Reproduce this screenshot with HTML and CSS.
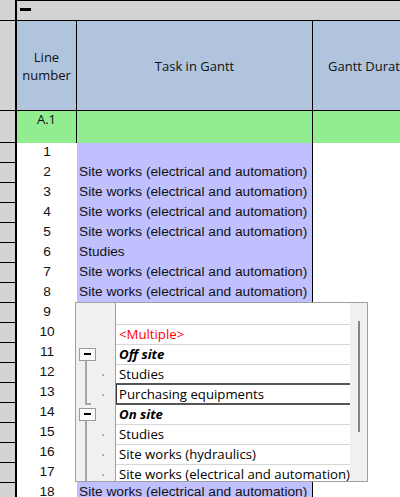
FILE: index.html
```html
<!DOCTYPE html>
<html>
<head>
<meta charset="utf-8">
<link rel="stylesheet" href="styles.css">
</head>
<body>
<div class="sheet">
  <div class="row top">
    <div class="gutter"></div>
    <div class="topbar"><span class="collapse"></span></div>
  </div>
  <div class="row head">
    <div class="gutter"></div>
    <div class="cell c1 hd">Line<br>number</div>
    <div class="cell c2 hd">Task in Gantt</div>
    <div class="cell c3 hd hd3">Gantt Duration</div>
  </div>
  <div class="row group">
    <div class="gutter"></div>
    <div class="cell c1 grp">A.1</div>
    <div class="cell c2 grp"></div>
    <div class="cell c3 grp"></div>
  </div>
  <div class="row data"><div class="gutter"></div><div class="cell c1 num">1</div><div class="cell c2 task"></div><div class="cell c3"></div></div>
  <div class="row data"><div class="gutter"></div><div class="cell c1 num">2</div><div class="cell c2 task">Site works (electrical and automation)</div><div class="cell c3"></div></div>
  <div class="row data"><div class="gutter"></div><div class="cell c1 num">3</div><div class="cell c2 task">Site works (electrical and automation)</div><div class="cell c3"></div></div>
  <div class="row data"><div class="gutter"></div><div class="cell c1 num">4</div><div class="cell c2 task">Site works (electrical and automation)</div><div class="cell c3"></div></div>
  <div class="row data"><div class="gutter"></div><div class="cell c1 num">5</div><div class="cell c2 task">Site works (electrical and automation)</div><div class="cell c3"></div></div>
  <div class="row data"><div class="gutter"></div><div class="cell c1 num">6</div><div class="cell c2 task">Studies</div><div class="cell c3"></div></div>
  <div class="row data"><div class="gutter"></div><div class="cell c1 num">7</div><div class="cell c2 task">Site works (electrical and automation)</div><div class="cell c3"></div></div>
  <div class="row data"><div class="gutter"></div><div class="cell c1 num">8</div><div class="cell c2 task">Site works (electrical and automation)</div><div class="cell c3"></div></div>
  <div class="row data"><div class="gutter"></div><div class="cell c1 num">9</div><div class="cell c2 task"></div><div class="cell c3"></div></div>
  <div class="row data"><div class="gutter"></div><div class="cell c1 num">10</div><div class="cell c2 task"></div><div class="cell c3"></div></div>
  <div class="row data"><div class="gutter"></div><div class="cell c1 num">11</div><div class="cell c2 task"></div><div class="cell c3"></div></div>
  <div class="row data"><div class="gutter"></div><div class="cell c1 num">12</div><div class="cell c2 task"></div><div class="cell c3"></div></div>
  <div class="row data"><div class="gutter"></div><div class="cell c1 num">13</div><div class="cell c2 task"></div><div class="cell c3"></div></div>
  <div class="row data"><div class="gutter"></div><div class="cell c1 num">14</div><div class="cell c2 task"></div><div class="cell c3"></div></div>
  <div class="row data"><div class="gutter"></div><div class="cell c1 num">15</div><div class="cell c2 task"></div><div class="cell c3"></div></div>
  <div class="row data"><div class="gutter"></div><div class="cell c1 num">16</div><div class="cell c2 task"></div><div class="cell c3"></div></div>
  <div class="row data"><div class="gutter"></div><div class="cell c1 num">17</div><div class="cell c2 task"></div><div class="cell c3"></div></div>
  <div class="row data"><div class="gutter"></div><div class="cell c1 num">18</div><div class="cell c2 task">Site works (electrical and automation)</div><div class="cell c3"></div></div>
</div>

<div class="dropdown">
  <div class="tree">
    <span class="toggle t1"></span>
    <span class="vline v1"></span>
    <span class="hline"></span>
    <span class="toggle t2"></span>
    <span class="vline v2"></span>
    <span class="dot d1"></span>
    <span class="dot d2"></span>
    <span class="dot d3"></span>
    <span class="dot d4"></span>
    <span class="dot d5"></span>
  </div>
  <div class="list">
    <div class="item first"></div>
    <div class="item multi">&lt;Multiple&gt;</div>
    <div class="item grouphd">Off site</div>
    <div class="item before-sel">Studies</div>
    <div class="item selected">Purchasing equipments</div>
    <div class="item grouphd">On site</div>
    <div class="item">Studies</div>
    <div class="item">Site works (hydraulics)</div>
    <div class="item">Site works (electrical and automation)</div>
  </div>
  <div class="scroll"><span class="thumb"></span></div>
</div>
</body>
</html>
```
FILE: styles.css
```css
html, body {
  margin: 0;
  padding: 0;
  width: 400px;
  height: 497px;
  overflow: hidden;
  background: #fff;
}
body {
  position: relative;
  font-family: "Liberation Sans", Arial, sans-serif;
  color: #111;
}
.sheet {
  display: flex;
  flex-direction: column;
  width: 400px;
  height: 497px;
  overflow: hidden;
}
.row {
  display: flex;
  flex: none;
}
.gutter {
  width: 17px;
  flex: none;
  box-sizing: border-box;
  background: #d3d3d3;
  border-right: 2px solid #000;
  border-bottom: 1px solid #000;
}
.top { height: 21px; }
.topbar {
  flex: 1;
  box-sizing: border-box;
  background: #d3d3d3;
  border-top: 1px solid #000;
  border-bottom: 1px solid #000;
  padding: 7px 0 0 3px;
}
.collapse {
  display: block;
  width: 11px;
  height: 3px;
  background: #000;
}
.cell {
  box-sizing: border-box;
  flex: none;
  overflow: hidden;
  white-space: nowrap;
}
.c1 { width: 60px; }
.c2 { width: 236px; border-right: 1px solid #000; }
.c3 { width: 87px; }

.head { height: 90px; }
.hd {
  background: #b0c4de;
  border-bottom: 1px solid #000;
  display: flex;
  align-items: center;
  justify-content: center;
  text-align: center;
  font-family: "Open Sans", "Liberation Sans", sans-serif;
  font-size: 13px;
  line-height: 18px;
  color: #111;
}
.hd3 {
  justify-content: flex-start;
  padding-left: 15px;
}
.head .c1 { border-right: 1px solid #000; }

.group { height: 32px; }
.grp {
  background: #90ee90;
  font-family: "Open Sans", "Liberation Sans", sans-serif;
  font-size: 13px;
  line-height: 16px;
  text-align: center;
  color: #111;
}
.group .c1 { border-right: 1px solid #000; }

.data { height: 20px; }
.num {
  text-align: center;
  font-size: 13.7px;
  line-height: 17px;
}
.task {
  background: #c0c0ff;
  font-size: 13.7px;
  line-height: 17px;
  padding-left: 2px;
}

/* dropdown */
.dropdown {
  position: absolute;
  left: 75px;
  top: 302px;
  width: 293px;
  height: 180px;
  box-sizing: border-box;
  border: 1px solid #a0a0a0;
  background: #fff;
  display: flex;
  overflow: hidden;
  font-family: "Open Sans", "Liberation Sans", sans-serif;
  font-size: 13.2px;
}
.tree {
  position: relative;
  width: 40px;
  flex: none;
  box-sizing: border-box;
  background: #f0f0f0;
  border-right: 1px solid #a0a0a0;
}
.toggle {
  position: absolute;
  left: 3px;
  width: 17px;
  height: 13px;
  box-sizing: border-box;
  border: 1px solid #9a9a9a;
  background: #fbfbfb;
}
.toggle::after {
  content: "";
  position: absolute;
  left: 4px;
  top: 4px;
  width: 7px;
  height: 2px;
  background: #000;
}
.t1 { top: 45px; }
.t2 { top: 105px; }
.vline {
  position: absolute;
  left: 9px;
  width: 2px;
  background: #a8a8a8;
}
.v1 { top: 58px; height: 44px; }
.v2 { top: 118px; height: 80px; }
.hline {
  position: absolute;
  left: 9px;
  top: 100px;
  width: 6px;
  height: 2px;
  background: #a8a8a8;
}
.dot {
  position: absolute;
  left: 26px;
  width: 2px;
  height: 2px;
  background: #b0b0b0;
}
.d1 { top: 71px; }
.d2 { top: 91px; }
.d3 { top: 131px; }
.d4 { top: 151px; }
.d5 { top: 171px; }

.list {
  flex: 1;
  display: flex;
  flex-direction: column;
  overflow: hidden;
}
.item {
  flex: none;
  box-sizing: border-box;
  height: 20px;
  border-bottom: 1px solid #d6d6d6;
  padding-left: 3px;
  line-height: 19px;
  white-space: nowrap;
  overflow: hidden;
  color: #000;
}
.item.first { height: 22px; }
.item.multi { color: #ff0000; }
.item.grouphd { font-weight: bold; font-style: italic; }
.item.before-sel { height: 18px; border-bottom: none; }
.item.selected {
  height: 22px;
  border-top: 2px solid #555;
  border-bottom: 2px solid #555;
  border-left: 1px solid #333;
  padding-left: 2px;
  line-height: 18px;
}
.scroll {
  position: relative;
  width: 17px;
  flex: none;
  background: #f0f0f0;
}
.thumb {
  position: absolute;
  left: 8px;
  top: 18px;
  width: 2px;
  height: 111px;
  background: #868686;
}
```
